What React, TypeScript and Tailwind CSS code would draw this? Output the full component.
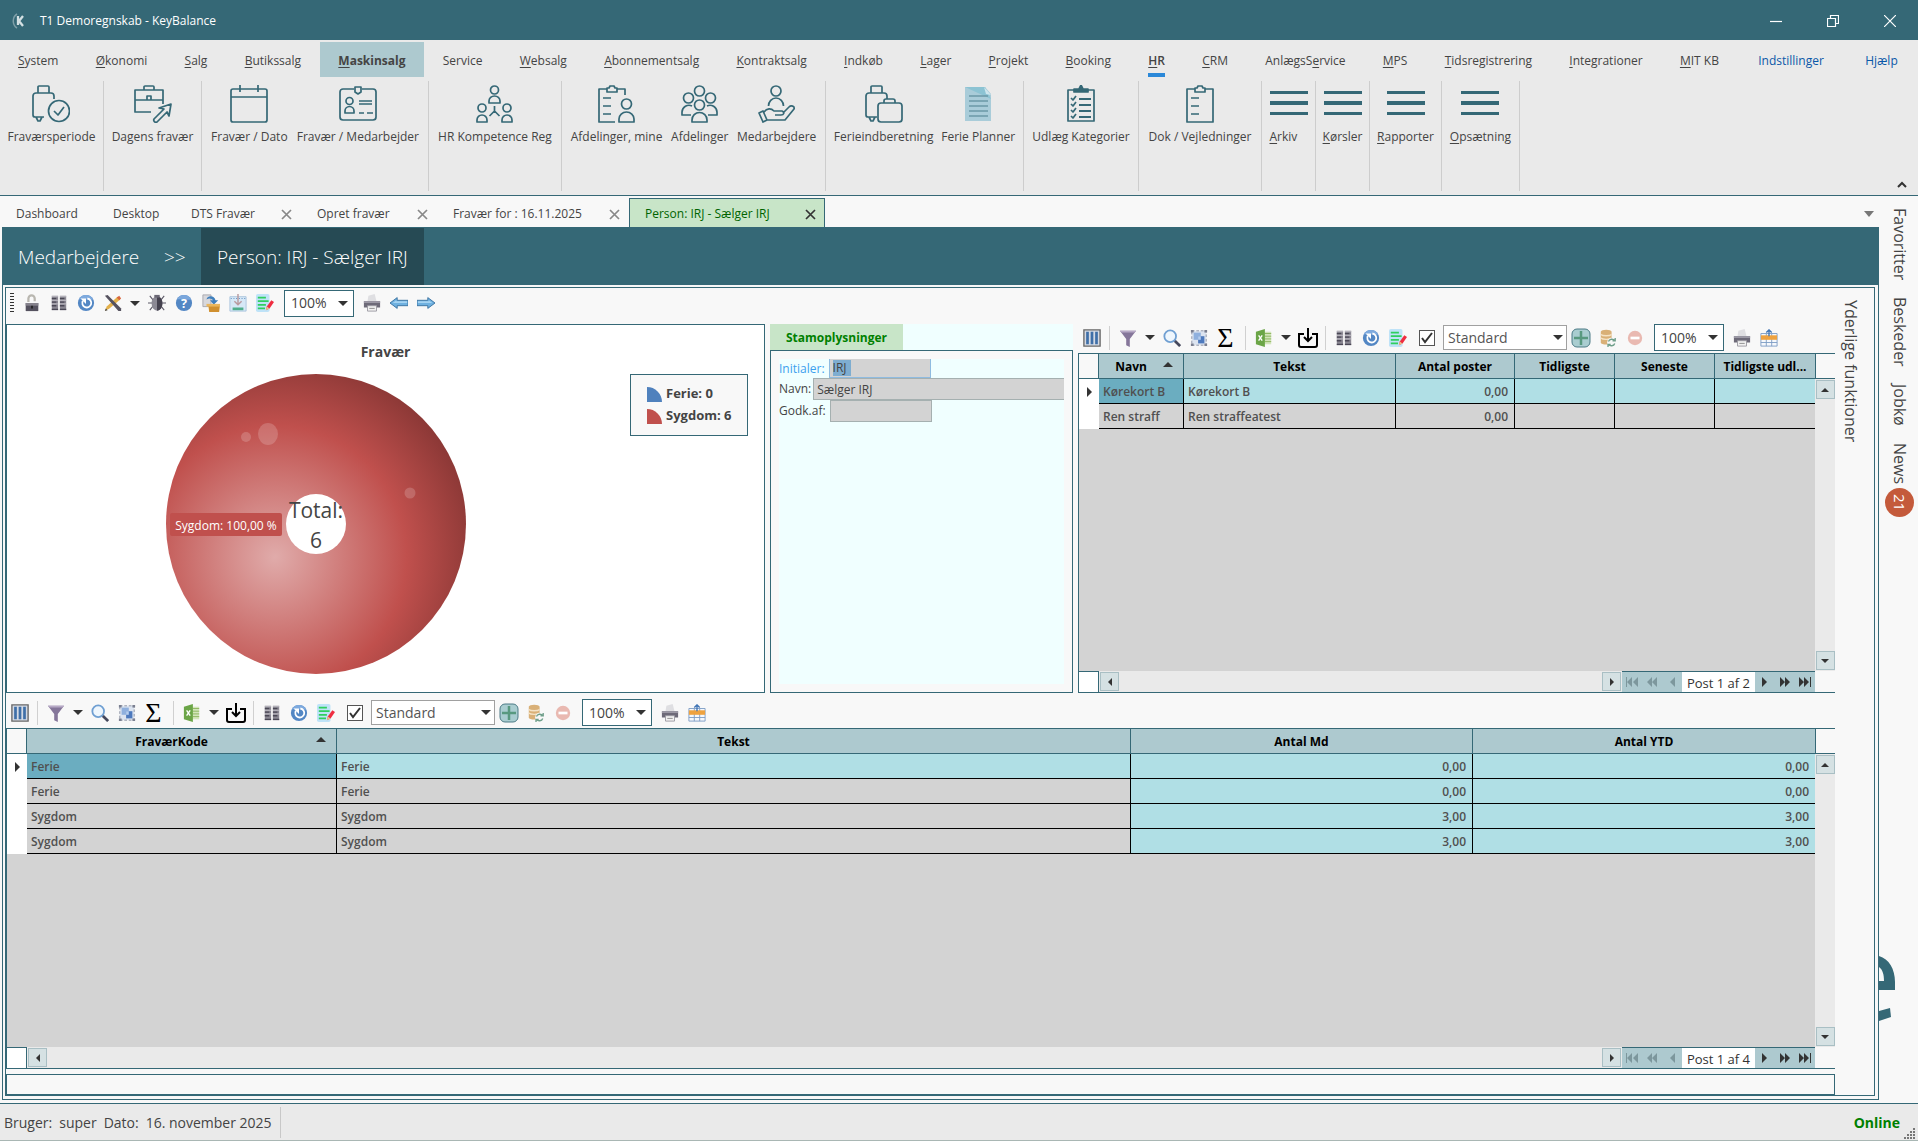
import { useState, type ReactNode } from "react";

const menu = [
  { key: "S", rest: "ystem" },
  { key: "Ø", rest: "konomi" },
  { key: "S", rest: "alg" },
  { key: "B", rest: "utikssalg" },
  { key: "M", rest: "askinsalg", highlight: true },
  { key: "", rest: "Service" },
  { key: "W", rest: "ebsalg" },
  { key: "A", rest: "bonnementsalg" },
  { key: "K", rest: "ontraktsalg" },
  { key: "I", rest: "ndkøb" },
  { key: "L", rest: "ager" },
  { key: "P", rest: "rojekt" },
  { key: "B", rest: "ooking" },
  { key: "H", rest: "R", current: true },
  { key: "C", rest: "RM" },
  { before: "AnlægsS", key: "e", rest: "rvice" },
  { key: "M", rest: "PS" },
  { key: "T", rest: "idsregistrering" },
  { key: "I", rest: "ntegrationer" },
  { key: "M", rest: "IT KB" },
  { key: "", rest: "Indstillinger", blue: true },
  { key: "", rest: "Hjælp", blue: true },
];

/* ---------- ribbon icons ---------- */

function Line({ children }: { children: ReactNode }) {
  return (
    <svg width="38" height="38" viewBox="0 0 38 38" fill="none" stroke="#356876" strokeWidth="1.7" strokeLinejoin="round" aria-hidden="true">
      {children}
    </svg>
  );
}

const Suitcase = () => (
  <path d="M6 8V2a1 1 0 0 1 1-1h9a1 1 0 0 1 1 1v6M12 32H3a2 2 0 0 1-2-2V11a3 3 0 0 1 3-3h15a3 3 0 0 1 3 3v3M4 32l2 4h2l2-4" />
);

const ribbonIcons: Record<string, ReactNode> = {
  period: (
    <Line>
      <Suitcase />
      <circle cx="27" cy="26" r="10.5" fill="#eaeaea" />
      <path d="M22 26l4 4 6-8" />
    </Line>
  ),
  today: (
    <Line>
      <path d="M10 5V2a1 1 0 0 1 1-1h8a1 1 0 0 1 1 1v3M1 5h28v10H1zM1 15v12h16M29 15v4M13 11h4v4h-4z" />
      <path d="M20 34l10-10-5-1 12-4-2 12-2-4-10 10c-2 1-4-1-3-3z" />
    </Line>
  ),
  calendar: (
    <Line>
      <rect x="1" y="4" width="36" height="33" rx="2" />
      <path d="M1 12h36M10 0v7M28 0v7" />
    </Line>
  ),
  badge: (
    <Line>
      <path d="M15 4H4a3 3 0 0 0-3 3v25a3 3 0 0 0 3 3h30a3 3 0 0 0 3-3V7a3 3 0 0 0-3-3H23" />
      <path d="M16 2h6v5l-3 2-3-2zM20 16h13M20 19h13M20 28h5M28 28h6" />
      <circle cx="10.500" cy="16" r="3.500" />
      <path d="M6 28v-2a4.500 4.500 0 0 1 9 0v2z" />
    </Line>
  ),
  tree: (
    <Line>
      <circle cx="18.500" cy="5" r="4" />
      <path d="M13 18v-2a5.500 5 0 0 1 11 0v2zM18.500 21v5l-5 5M18.500 26l5 5" />
      <circle cx="6" cy="23" r="4" />
      <path d="M1 37v-2a5 5 0 0 1 10 0v2z" />
      <circle cx="31" cy="23" r="4" />
      <path d="M26 37v-2a5 5 0 0 1 10 0v2z" />
    </Line>
  ),
  clipPerson: (
    <Line>
      <path d="M9 4H1v33h16M19 4h8v6M9 3h2l1-2h4l1 2h2v4H9zM5 13h8M5 21h8M5 29h8" />
      <circle cx="28.500" cy="19" r="5" />
      <path d="M21 37v-3a7.500 7 0 0 1 15 0v3z" />
    </Line>
  ),
  people: (
    <Line>
      <circle cx="18.500" cy="6" r="5" />
      <circle cx="7.500" cy="13" r="5" />
      <circle cx="29.500" cy="13" r="5" />
      <circle cx="18.500" cy="20" r="5" />
      <path d="M11 37v-2a7 7 0 0 1 15 0v2zM10 30H1v-3a7 7 0 0 1 10-6M27 30h9v-3a7 7 0 0 0-10-6" />
    </Line>
  ),
  hand: (
    <Line>
      <circle cx="18" cy="6" r="5" />
      <path d="M10.500 21a7.500 8 0 0 1 15 0M1 28l4-2 4 9-4 2zM6 27c3-4 7-4 10-1h8c3 1 2 4-1 4h-6M25 28l6-6c2-2 6-1 5 2l-9 11H8" />
    </Line>
  ),
  luggage: (
    <Line>
      <Suitcase />
      <rect x="13" y="18" width="24" height="19" rx="3" fill="#eaeaea" />
      <path d="M19 18v-2a2 2 0 0 1 2-2h7a2 2 0 0 1 2 2v2" />
    </Line>
  ),
  planner: (
    <svg width="38" height="38" viewBox="0 0 38 38" aria-hidden="true">
      <path d="M6 2h20l6 7v27H6z" fill="#a9ccd9" />
      <path d="M6 2h20l6 12z" fill="#8cc3d3" />
      <path d="M25 2l7 8-5-1z" fill="#cfe6ee" />
      <path d="M10 11h19M10 16h19M10 21h19M10 26h19M10 31h19" stroke="#6b98a6" strokeWidth="1.500" />
    </svg>
  ),
  checklist: (
    <Line>
      <path d="M6 5h26v31H6z" />
      <path d="M12 7V4h5l2-4 2 4h5v3z" fill="#356876" />
      <path d="M17 14h12M17 20h12M17 26h12M17 32h12" strokeWidth="2" />
      <path d="M9 13l2 2 3-4M9 19l2 2 3-4M9 25l2 2 3-4M9 31l2 2 3-4" />
    </Line>
  ),
  clip: (
    <Line>
      <path d="M14 4H6v33h26V4h-8M14 3h2l1-2h4l1 2h2v4H14zM10 13h8M10 21h8M10 29h8" />
    </Line>
  ),
  bars: (
    <svg width="38" height="38" viewBox="0 0 38 38" fill="#356876" aria-hidden="true">
      <path d="M0 6h38v3H0zM0 16h38v4H0zM0 27h38v3H0z" />
    </svg>
  ),
};

const ribbon = [
  [{ icon: "period", label: "Fraværsperiode" }],
  [{ icon: "today", label: "Dagens fravær" }],
  [
    { icon: "calendar", label: "Fravær / Dato" },
    { icon: "badge", label: "Fravær / Medarbejder" },
  ],
  [{ icon: "tree", label: "HR Kompetence Reg" }],
  [
    { icon: "clipPerson", label: "Afdelinger, mine" },
    { icon: "people", label: "Afdelinger" },
    { icon: "hand", label: "Medarbejdere" },
  ],
  [
    { icon: "luggage", label: "Ferieindberetning" },
    { icon: "planner", label: "Ferie Planner" },
  ],
  [{ icon: "checklist", label: "Udlæg Kategorier" }],
  [{ icon: "clip", label: "Dok / Vejledninger" }],
  [{ icon: "bars", label: "Arkiv", menu: true }],
  [{ icon: "bars", label: "Kørsler", menu: true }],
  [{ icon: "bars", label: "Rapporter", menu: true }],
  [{ icon: "bars", label: "Opsætning", menu: true }],
];

/* ---------- toolbar icons ---------- */

const Svg = ({ children }: { children: ReactNode }) => (
  <svg width="18" height="18" viewBox="0 0 20 20" aria-hidden="true">
    {children}
  </svg>
);

const toolIcons: Record<string, ReactNode> = {
  lock: (
    <Svg>
      <path d="M6 9V5a3.500 3.500 0 0 1 7 0v3" fill="none" stroke="#b9b7b0" strokeWidth="2.500" />
      <path d="M3 10h14v9H3z" fill="#55525f" />
      <path d="M3 10h14v3H3z" fill="#85828c" />
      <path d="M9 13h2v3H9z" fill="#222" />
    </Svg>
  ),
  columns: (
    <Svg>
      <path d="M2 2h7v16H2zM11 2h7v16h-7z" fill="#8a8792" />
      <path d="M2 5h5M2 9h5M2 13h5M2 17h7M11 5h5M11 9h5M11 13h5M11 17h7" stroke="#4a4755" strokeWidth="1.500" />
      <path d="M2 3h7M11 3h7M2 7h7M11 7h7M2 11h7M11 11h7" stroke="#c3c1c8" strokeWidth="1" />
    </Svg>
  ),
  refresh: (
    <Svg>
      <circle cx="10" cy="10" r="9" fill="#5387c4" />
      <path d="M2 6a9 9 0 0 1 16 0c-4 1-10-1-16 0z" fill="#7eaade" />
      <path d="M6.500 7.500a5 5 0 1 0 5-2.500" fill="none" stroke="#fff" strokeWidth="2" />
      <path d="M4 5h6v6z" fill="#fff" />
    </Svg>
  ),
  tools: (
    <Svg>
      <path d="M1 19l2-5L15 3l3 3L6 16z" fill="#e3b04b" />
      <path d="M14 4l3-2 2 3-2 2z" fill="#d9663f" />
      <path d="M1 2l3-1 15 15v3h-3z" fill="#55525f" />
      <path d="M1 19l1-3 2 2z" fill="#444" />
    </Svg>
  ),
  bug: (
    <Svg>
      <path d="M2 2l4 5M0 10h5M2 18l4-5M18 2l-4 5M20 10h-5M18 18l-4-5" stroke="#5b5866" strokeWidth="1.200" />
      <ellipse cx="10" cy="10.500" rx="6" ry="8" fill="#8b8994" />
      <path d="M10 2.500c8 0 8 16 0 16z" fill="#45424f" />
      <path d="M7 1h6v3H7z" fill="#6b6875" />
    </Svg>
  ),
  help: (
    <Svg>
      <circle cx="10" cy="10" r="9" fill="#5387c4" />
      <path d="M2 6a9 9 0 0 1 16 0c-4 1-10-1-16 0z" fill="#7ba7dc" />
      <text x="10" y="15" textAnchor="middle" fontSize="14" fontWeight="700" fill="#fff">?</text>
    </Svg>
  ),
  box: (
    <Svg>
      <path d="M1 1h9v13H1z" fill="#d8d8dc" stroke="#a5a5ad" />
      <path d="M5 6c1-5 9-5 10 1h3l-5 5-4-5h3c-1-2-4-3-7-1z" fill="#3f7fbd" />
      <path d="M7 12h13l-1 8H8z" fill="#d0902f" />
      <path d="M5 11h15v3H5z" fill="#eab65c" />
    </Svg>
  ),
  importFile: (
    <Svg>
      <path d="M1 3h18v16H1z" fill="#d6e8f7" stroke="#a8c3dd" />
      <path d="M2 5h16" stroke="#4d7fb5" strokeDasharray="1 2" />
      <path d="M10 0v11M6 8l4 4 4-4" fill="none" stroke="#b99a9f" strokeWidth="1.600" />
      <path d="M4 15h12v3H4z" fill="#4fae8c" />
    </Svg>
  ),
  edit: (
    <Svg>
      <rect x="0" y="0" width="15" height="20" rx="2" fill="#bfe3f8" />
      <path d="M2 4h9M2 8h12M2 12h9M2 16h8" stroke="#2fcf5f" strokeWidth="1.900" />
      <path d="M11 18l1-4 5-7 3 2-5 7z" fill="#ef2d40" />
      <path d="M11 18l1-4 3 2z" fill="#e8c58a" />
    </Svg>
  ),
  print: (
    <Svg>
      <path d="M5 8l1-6 7-2 2 8z" fill="#dfdfe2" />
      <path d="M1 8h18v7H1z" fill="#6d6a78" />
      <path d="M1 8h18v2H1z" fill="#9c99a5" />
      <path d="M5 13h10v6H5z" fill="#f1f1f1" stroke="#9a98a0" />
      <path d="M7 16h6" stroke="#888" />
    </Svg>
  ),
  prev: (
    <Svg>
      <path d="M0 10l8-6v3h12v6H8v3z" fill="#6fb1e0" stroke="#386f9e" />
      <path d="M3 10l4-3v1h12v2z" fill="#a5d3f2" />
    </Svg>
  ),
  next: (
    <Svg>
      <path d="M20 10l-8-6v3H0v6h12v3z" fill="#6fb1e0" stroke="#386f9e" />
      <path d="M17 10l-4-3v1H1v2z" fill="#a5d3f2" />
    </Svg>
  ),
  grid: (
    <Svg>
      <path d="M1 1h18v18H1z" fill="#d4dae4" stroke="#686868" strokeWidth="1.500" />
      <path d="M5 3v14M10 3v14M15 3v14" stroke="#3f6fa8" strokeWidth="3" />
    </Svg>
  ),
  funnel: (
    <Svg>
      <path d="M1 2h18l-7 9v9l-4-2v-7z" fill="#85769a" />
      <path d="M1 2h18l-2 2H3z" fill="#b7a9c6" />
    </Svg>
  ),
  search: (
    <Svg>
      <path d="M13 13l6 6" stroke="#45485c" strokeWidth="3" />
      <circle cx="8" cy="8" r="6.500" fill="#eef6fd" stroke="#6f9fd2" strokeWidth="2" />
    </Svg>
  ),
  select: (
    <Svg>
      <path d="M2 2h16v16H2z" fill="#dce4f0" stroke="#8a90a0" strokeDasharray="3 2" />
      <path d="M4 4h8v8H4z" fill="#8fb0de" />
      <path d="M9 8h7v8H9z" fill="#4d79bd" />
      <path d="M9 8h3v4H9z" fill="#b5cdee" />
      <path d="M1 1h3v3H1zM16 1h3v3h-3zM1 16h3v3H1zM16 16h3v3h-3z" fill="#7a7f90" />
    </Svg>
  ),
  excel: (
    <Svg>
      <path d="M10 3h8v14h-8z" fill="#d3e5bb" />
      <path d="M11 5h7M11 8h7M11 11h7M11 14h7" stroke="#8ab35a" />
      <path d="M1 3l10-3v20L1 17z" fill="#6ba547" />
      <path d="M4 7l4 6M8 7l-4 6" stroke="#fff" strokeWidth="1.500" />
    </Svg>
  ),
  download: (
    <svg width="20" height="20" viewBox="0 0 20 20" aria-hidden="true">
      <path d="M6 6H1v11a2 2 0 0 0 2 2h14a2 2 0 0 0 2-2V6h-5M10 0v13M6 9l4 4 4-4" fill="none" stroke="#000" strokeWidth="2" />
    </svg>
  ),
  add: (
    <svg width="20" height="20" viewBox="0 0 20 20" aria-hidden="true">
      <rect x="1" y="1" width="18" height="18" rx="5" fill="#a9cdd0" stroke="#4c7b86" />
      <path d="M10 3v14M3 10h14" stroke="#58997f" strokeWidth="2.500" />
    </svg>
  ),
  database: (
    <Svg>
      <path d="M2 3c0-3 12-3 12 0v12c0 3-12 3-12 0z" fill="#d9b077" />
      <path d="M2 6c2 2 10 2 12 0M2 10c2 2 10 2 12 0" fill="none" stroke="#f5e3c6" strokeWidth="1.500" />
      <circle cx="14" cy="15" r="5" fill="#f8f8f8" />
      <path d="M10.500 14a4 4 0 0 1 7-1M17.500 16a4 4 0 0 1-7 1M18 10v3h-3M10 20v-3h3" fill="none" stroke="#6f9f8a" strokeWidth="1.500" />
    </Svg>
  ),
  remove: (
    <Svg>
      <circle cx="10" cy="10" r="8" fill="#e9b9b1" />
      <path d="M5 10h10" stroke="#fff" strokeWidth="3" />
    </Svg>
  ),
  table: (
    <Svg>
      <path d="M1 5h18v14H1z" fill="#f5f8fc" stroke="#7d9cc4" />
      <path d="M1 15h18M7 5v14M13 5v14" stroke="#7d9cc4" />
      <path d="M1 7h18v5H1z" fill="#eea23f" />
      <path d="M10 8V2M7 4l3-3 3 3" fill="none" stroke="#3f74b5" strokeWidth="1.500" />
    </Svg>
  ),
};

function Tool({ icon, label }: { icon: string; label: string }) {
  return (
    <button type="button" aria-label={label} className="flex h-6 w-[27px] shrink-0 items-center justify-center">
      {toolIcons[icon]}
    </button>
  );
}

const DownCaret = () => (
  <svg width="10" height="5" viewBox="0 0 10 5" fill="#333" aria-hidden="true">
    <path d="M0 0h10L5 5z" />
  </svg>
);

function CaretButton({ label }: { label: string }) {
  return (
    <button type="button" aria-label={label} className="flex h-6 w-[17px] shrink-0 items-center justify-center">
      <DownCaret />
    </button>
  );
}

const Divider = () => <span className="mx-1 h-6 w-px shrink-0 bg-[#d0d0d0]" />;

function Zoom() {
  return (
    <span className="relative mr-1 flex h-[27px] w-[70px] shrink-0 items-center">
      <select aria-label="Zoom" className="size-full appearance-none border border-[#356876] bg-white pl-1.5 text-sm text-[#444] outline-none">
        <option>100%</option>
      </select>
      <span className="pointer-events-none absolute right-1.5">
        <DownCaret />
      </span>
    </span>
  );
}

function GridToolbar() {
  const [checked, setChecked] = useState(true);
  return (
    <div className="flex items-center">
      <Tool icon="grid" label="Kolonner" />
      <Divider />
      <Tool icon="funnel" label="Filter" />
      <CaretButton label="Filtervalg" />
      <Tool icon="search" label="Søg" />
      <Tool icon="select" label="Marker" />
      <button type="button" aria-label="Sum" className="mr-0.5 w-[27px] shrink-0 font-['Liberation_Serif',serif] text-[28px] leading-6 text-black">
        Σ
      </button>
      <Divider />
      <Tool icon="excel" label="Excel" />
      <CaretButton label="Excelvalg" />
      <Tool icon="download" label="Hent" />
      <Divider />
      <Tool icon="columns" label="Layout" />
      <Tool icon="refresh" label="Opdater" />
      <Tool icon="edit" label="Rediger" />
      <span className="relative mr-1.5 ml-2 flex size-4 shrink-0">
        <input
          type="checkbox"
          aria-label="Vis layout"
          checked={checked}
          onChange={() => setChecked(!checked)}
          className="size-4 appearance-none border border-[#555] bg-white"
        />
        {checked && (
          <svg viewBox="0 0 16 16" className="pointer-events-none absolute inset-0 size-4" fill="none" stroke="#333" strokeWidth="2">
            <path d="M3 8l3 4 7-9" />
          </svg>
        )}
      </span>
      <span className="relative ml-0.5 flex h-[25px] w-[124px] shrink-0 items-center">
        <select aria-label="Layout" className="size-full appearance-none border border-[#a0a0a0] bg-white pl-1 text-sm text-[#555] outline-none">
          <option>Standard</option>
        </select>
        <span className="pointer-events-none absolute right-1">
          <DownCaret />
        </span>
      </span>
      <Tool icon="add" label="Tilføj" />
      <Tool icon="database" label="Database" />
      <Tool icon="remove" label="Fjern" />
      <span className="w-1.5" />
      <Zoom />
      <Tool icon="print" label="Udskriv" />
      <Tool icon="table" label="Tabel" />
    </div>
  );
}

/* ---------- data grid ---------- */

type Column = { title: string; width?: string; numeric?: boolean; sorted?: boolean; tinted?: boolean };

function ArrowButton({ d, label }: { d: string; label: string }) {
  return (
    <button type="button" aria-label={label} className="flex size-[19px] shrink-0 items-center justify-center border border-[#a9bfc4] bg-[#d5e1e3]">
      <svg width="10" height="10" viewBox="0 0 10 10" fill="#333" aria-hidden="true">
        <path d={d} />
      </svg>
    </button>
  );
}

function PagerButton({ d, label, disabled }: { d: string; label: string; disabled?: boolean }) {
  return (
    <button type="button" aria-label={label} disabled={disabled} className="flex h-full w-5 items-center justify-center text-[#333] disabled:text-[#7d979d]">
      <svg width="12" height="10" viewBox="0 0 12 10" fill="currentColor" aria-hidden="true">
        <path d={d} />
      </svg>
    </button>
  );
}

function DataGrid({ name, columns, rows }: { name: string; columns: Column[]; rows: string[][] }) {
  return (
    <div className="flex min-h-0 flex-1 flex-col border-y border-l border-[#356876]">
      <div className="flex min-h-0 flex-1">
        <div className="min-w-0 flex-1 bg-[#d3d3d3]">
          <table aria-label={name} className="w-full table-fixed border-separate border-spacing-0 text-xs">
            <colgroup>
              <col className="w-5" />
              {columns.map((c) => (
                <col key={c.title} className={c.width} />
              ))}
            </colgroup>
            <thead>
              <tr className="h-[25px]">
                <td className="border-r border-b border-[#356876] bg-[#f8f8f8] p-0" />
                {columns.map((c, i) => (
                  <th
                    key={c.title}
                    scope="col"
                    className={`relative border-b border-[#356876] bg-[#adc9cf] px-1 pt-0.5 pb-0 font-bold whitespace-nowrap text-black ${i < columns.length - 1 ? "border-r" : ""} ${c.sorted ? "pr-6" : ""}`}
                  >
                    {c.title}
                    {c.sorted && (
                      <svg width="10" height="5" viewBox="0 0 10 5" fill="#333" className="absolute top-2 right-2.5">
                        <path d="M0 5h10L5 0z" />
                      </svg>
                    )}
                  </th>
                ))}
              </tr>
            </thead>
            <tbody>
              {rows.map((row, r) => (
                <tr key={r} className="h-[25px]">
                  <td className="bg-white p-0">
                    {r === 0 && (
                      <svg width="5" height="10" viewBox="0 0 5 10" fill="#333" className="mx-auto">
                        <path d="M0 0v10l5-5z" />
                      </svg>
                    )}
                  </td>
                  {row.map((cell, i) => (
                    <td
                      key={i}
                      className={`border-b border-black pt-0.5 pb-0 pl-1 font-semibold whitespace-nowrap text-[#505050] ${i < row.length - 1 ? "border-r" : ""} ${columns[i].numeric ? "pr-1.5 text-right" : ""} ${
                        r === 0 && i === 0 ? "bg-[#6badc0]" : r === 0 || columns[i].tinted ? "bg-[#b0dfe5]" : "bg-[#d3d3d3]"
                      }`}
                    >
                      {cell}
                    </td>
                  ))}
                </tr>
              ))}
            </tbody>
          </table>
        </div>
        <div className="flex w-5 shrink-0 flex-col bg-[#eaeaea]">
          <div className="h-[25px] shrink-0 border-b border-l border-[#356876] bg-[#f8f8f8]" />
          <div className="flex flex-1 flex-col items-center justify-between py-px">
            <ArrowButton label="Op" d="M1 7h8L5 3z" />
            <ArrowButton label="Ned" d="M1 3h8L5 7z" />
          </div>
        </div>
      </div>
      <div className="flex h-[21px] shrink-0 pr-5">
        <div className="w-5 border-t border-r border-[#356876] bg-white" />
        <div className="flex flex-1 items-center justify-between bg-[#eaeaea] px-px">
          <ArrowButton label="Venstre" d="M7 1v8L3 5z" />
          <ArrowButton label="Højre" d="M3 1v8l4-4z" />
        </div>
        <div className="flex w-[193px] items-center border-t border-[#356876] bg-[#adc9cf]">
          <PagerButton disabled label="Første" d="M0 0h1v10H0zM6 0v10L1 5zM12 0v10L7 5z" />
          <PagerButton disabled label="Forrige side" d="M6 0v10L1 5zM11 0v10L6 5z" />
          <PagerButton disabled label="Forrige" d="M9 0v10L4 5z" />
          <span className="h-full flex-1 bg-white text-center text-[13px] leading-[22px] whitespace-nowrap text-[#333]">Post 1 af {rows.length}</span>
          <PagerButton label="Næste" d="M3 0v10l5-5z" />
          <PagerButton label="Næste side" d="M1 0v10l5-5zM6 0v10l5-5z" />
          <PagerButton label="Sidste" d="M0 0v10l5-5zM5 0v10l5-5zM11 0h1v10h-1z" />
        </div>
      </div>
    </div>
  );
}

/* ---------- chart ---------- */

function AbsenceChart() {
  return (
    <section aria-label="Fravær" className="flex flex-col border border-[#356876] bg-white">
      <h2 className="pt-[17px] text-center text-sm leading-5 font-bold text-[#444]">Fravær</h2>
      <div className="flex items-start pt-3">
        <div className="flex flex-1 justify-center pr-1.5">
          <svg width="300" height="300" viewBox="0 0 300 300" role="img" aria-label="Sygdom: 100,00 %">
            <defs>
              <radialGradient id="ball" gradientUnits="userSpaceOnUse" cx="109" cy="183" r="212">
                <stop offset="0" stopColor="#e0abaa" />
                <stop offset="0.620" stopColor="#c0504d" />
                <stop offset="1" stopColor="#853533" />
              </radialGradient>
            </defs>
            <circle cx="150" cy="150" r="150" fill="url(#ball)" />
            <g fill="#fff" fillOpacity="0.180">
              <circle cx="80" cy="63" r="5" />
              <ellipse cx="102" cy="60" rx="10" ry="11" />
              <circle cx="244" cy="119" r="5.500" />
            </g>
            <circle cx="150" cy="150" r="30" fill="#fff" />
            <g textAnchor="middle" fill="#444" fontSize="21">
              <text x="150" y="144">Total:</text>
              <text x="150" y="174">6</text>
            </g>
            <rect x="4" y="139" width="112" height="23" rx="2" fill="#c0504d" />
            <text x="60" y="156" textAnchor="middle" fill="#fff" fontSize="12">Sygdom: 100,00 %</text>
          </svg>
        </div>
        <ul className="mr-4 flex h-[62px] w-[118px] flex-col justify-center border border-[#356876] bg-[#f8f8f8] pl-4 text-[13px] font-bold text-[#444]">
          {[
            { label: "Ferie: 0", color: "#4f81bd" },
            { label: "Sygdom: 6", color: "#c0504d" },
          ].map((item) => (
            <li key={item.label} className="flex h-[22px] items-center gap-1">
              <svg width="15" height="15" viewBox="0 0 15 15" fill={item.color}>
                <path d="M0 0a15 15 0 0 1 15 15H0z" />
              </svg>
              {item.label}
            </li>
          ))}
        </ul>
      </div>
    </section>
  );
}

function MasterData() {
  return (
    <section className="flex flex-col bg-[#f0ffff]">
      <h2 className="h-[26px] w-[133px] bg-[#c8e5c8] pt-0.5 text-center text-xs leading-6 font-bold text-[#008000]">Stamoplysninger</h2>
      <div className="flex-1 border border-[#356876] bg-[#f8f8f8] p-2">
        <div className="h-full bg-[#f0ffff] text-xs text-[#444]">
          <div className="flex h-[19px] items-center gap-1">
            <label htmlFor="initialer" className="text-[#3ca0ee]">Initialer:</label>
            <span className="flex h-[19px] w-[102px] items-center border border-t-0 border-[#8fbbe0] bg-[#d3d3d3] pl-[3px]">
              <input id="initialer" defaultValue="IRJ" className="h-4 w-[18px] bg-[#7eadd0] outline-none" />
            </span>
          </div>
          <div className="flex h-[22px] items-center gap-0.5">
            <label htmlFor="navn">Navn:</label>
            <input id="navn" defaultValue="Sælger IRJ" className="h-[22px] min-w-0 flex-1 border border-r-0 border-[#a5b0b0] bg-[#d3d3d3] pl-[3px] outline-none" />
          </div>
          <div className="flex h-[22px] items-center gap-1">
            <label htmlFor="godk">Godk.af:</label>
            <input id="godk" className="h-[22px] w-[102px] border border-[#a5b0b0] bg-[#d3d3d3] pl-[3px] outline-none" />
          </div>
        </div>
      </div>
    </section>
  );
}

/* ---------- window parts ---------- */

function TitleBar() {
  return (
    <header className="flex h-10 items-center bg-[#356876] pt-0.5 text-xs text-white">
      <svg width="18" height="18" viewBox="0 0 18 18" className="mr-3 ml-2.5" aria-hidden="true">
        <path d="M7 2C2 5 2 13 7 16" fill="none" stroke="#7f9fa8" strokeWidth="1.500" />
        <path d="M8 4v9M13 4L9 9l4 5" fill="none" stroke="#d4e0e3" strokeWidth="2.300" />
      </svg>
      <h1>T1 Demoregnskab - KeyBalance</h1>
      <div className="ml-auto flex h-full">
        {[
          { label: "Minimer", d: "M0 6.500h12" },
          { label: "Gendan", d: "M.5 3.500h8v8h-8zM3.500 3V.5h8v8H9" },
          { label: "Luk", d: "M0 0l12 12M12 0L0 12" },
        ].map((b) => (
          <button key={b.label} type="button" aria-label={b.label} className="flex w-[57px] items-center justify-center">
            <svg width="12" height="12" viewBox="0 0 12 12" fill="none" stroke="#fff" strokeWidth="1.200">
              <path d={b.d} />
            </svg>
          </button>
        ))}
      </div>
    </header>
  );
}

function MenuBar() {
  return (
    <nav className="flex justify-between pt-0.5 text-xs text-[#444]">
      {menu.map((m, i) => (
        <button
          key={i}
          type="button"
          className={`relative h-[35px] pt-0.5 ${m.highlight ? "bg-[#adc9cf] font-bold" : ""} ${m.blue ? "px-5 text-[#0a58a8]" : "px-[18px]"} ${m.current ? "font-semibold" : ""}`}
        >
          {m.before}
          <span className="underline underline-offset-2">{m.key}</span>
          {m.rest}
          {m.current && <span className="absolute inset-x-[18px] bottom-0 h-1 bg-[#2b88d8]" />}
        </button>
      ))}
    </nav>
  );
}

function Ribbon() {
  return (
    <div className="relative mt-1 grid h-[114px] grid-cols-[104px_98px_227px_133px_264px_198px_115px_123px_54px_54px_72px_78px] pb-1">
      {ribbon.map((group, i) => (
        <div key={i} className="flex justify-evenly border-r border-[#cdcdcd]">
          {group.map((item) => (
            <button key={item.label} type="button" className="flex flex-col items-center pt-1 text-xs whitespace-nowrap text-[#444]">
              {ribbonIcons[item.icon]}
              <span className="mt-1 self-start leading-5">
                {"menu" in item ? (
                  <>
                    <span className="underline underline-offset-2">{item.label[0]}</span>
                    {item.label.slice(1)}
                  </>
                ) : (
                  item.label
                )}
              </span>
            </button>
          ))}
        </div>
      ))}
      <button type="button" aria-label="Skjul bånd" className="absolute right-2.5 bottom-1">
        <svg width="12" height="12" viewBox="0 0 12 12" fill="none" stroke="#333" strokeWidth="2">
          <path d="M2 8l4-4 4 4" />
        </svg>
      </button>
    </div>
  );
}

const Cross = () => (
  <svg width="11" height="11" viewBox="0 0 11 11" fill="none" stroke="currentColor" strokeWidth="1.700">
    <path d="M1 1l9 9M10 1l-9 9" />
  </svg>
);

function Tabs() {
  const tabs = ["Dashboard", "Desktop", "DTS Fravær", "Opret fravær", "Fravær for : 16.11.2025", "Person: IRJ - Sælger IRJ"];
  return (
    <div className="flex h-[31px] items-center justify-between pr-[5px]">
      <div className="grid grid-cols-[97px_78px_126px_136px_192px_196px] self-end text-xs text-[#444]">
        {tabs.map((tab, i) => (
          <div
            key={tab}
            className={`flex h-[29px] items-center justify-between border border-b-0 pt-0.5 pr-2 pl-[15px] whitespace-nowrap ${
              i === 5 ? "border-[#356876] bg-[#c8e5c8] text-[#006400]" : "border-transparent"
            }`}
          >
            <button type="button">{tab}</button>
            {i > 1 && (
              <button type="button" aria-label={`Luk ${tab}`} className={i === 5 ? "text-[#333]" : "text-[#888]"}>
                <Cross />
              </button>
            )}
          </div>
        ))}
      </div>
      <button type="button" aria-label="Flere faner" className="pt-1">
        <svg width="10" height="6" viewBox="0 0 10 6" fill="#777">
          <path d="M0 0h10L5 6z" />
        </svg>
      </button>
    </div>
  );
}

function SideRail() {
  return (
    <aside className="relative flex w-[39px] shrink-0 flex-col items-center bg-[#f8f8f8] pt-3 pl-0.5 text-[#444]">
      <div className="flex flex-col items-center gap-[17px]">
        {["Favoritter", "Beskeder", "Jobkø", "News"].map((label) => (
          <button key={label} type="button" className="text-base [writing-mode:vertical-rl]">
            {label}
          </button>
        ))}
      </div>
      <span className="mt-1 flex size-[29px] items-center justify-center rounded-full bg-[#c45a3b] text-[15px] text-white [writing-mode:vertical-rl]">21</span>
      {/* edge of the desktop logo behind the window */}
      <svg width="17" height="68" viewBox="0 0 17 68" fill="#356876" className="pointer-events-none absolute bottom-20 left-0" aria-hidden="true">
        <path fillRule="evenodd" d="M0 1c10 3 16 13 16 26v8H0v-9h5c0-6-1-11-5-14z" />
        <path d="M0 56l11-3 1 9-12 4z" />
      </svg>
    </aside>
  );
}

function StatusBar() {
  return (
    <footer className="flex h-[38px] items-center border-t border-b border-t-[#356876] border-b-[#a9b7b4] bg-[#eaeaea] pr-[18px] text-sm text-[#444]">
      <dl className="flex h-[31px] items-center gap-[7px] border-r border-[#c8c8c8] pt-0.5 pr-2 pl-1">
        <dt>Bruger:</dt>
        <dd>super</dd>
        <dt>Dato:</dt>
        <dd>16. november 2025</dd>
      </dl>
      <span className="ml-auto pt-0.5 font-bold text-[#008000]">Online</span>
      <svg width="12" height="12" viewBox="0 0 12 12" fill="#777" className="-mr-4 ml-1 self-end" aria-hidden="true">
        <path d="M9 0h2v2H9zM6 3h2v2H6zM9 3h2v2H9zM3 6h2v2H3zM6 6h2v2H6zM9 6h2v2H9zM0 9h2v2H0zM3 9h2v2H3zM6 9h2v2H6zM9 9h2v2H9z" />
      </svg>
    </footer>
  );
}

export default function App() {
  return (
    <div className="flex min-h-screen flex-col bg-[#f8f8f8] font-['Open_Sans','Noto_Sans',sans-serif]">
      <TitleBar />
      <div className="border-b border-[#356876] bg-[#eaeaea]">
        <MenuBar />
        <Ribbon />
      </div>
      <div className="flex flex-1">
        <div className="flex min-w-0 flex-1 flex-col pb-[3px]">
          <Tabs />
          <main className="ml-0.5 flex flex-1 flex-col border border-[#356876]">
            <div className="flex h-[57px] items-center bg-[#356876] text-[19px] font-light text-white">
              <a href="#medarbejdere" className="w-[146px] pt-0.5 pl-[15px]">Medarbejdere</a>
              <span className="w-[52px] pt-0.5 pl-[15px]">&gt;&gt;</span>
              <span className="flex h-full items-center bg-[#264a54] px-4 pt-0.5">Person: IRJ - Sælger IRJ</span>
            </div>
            <div className="m-0.5 mr-[3px] mb-[3px] flex flex-1 border border-[#356876]">
              <div className="flex min-w-0 flex-1 flex-col">
                <div className="flex h-9 items-center pb-1.5 pl-1">
                  <svg width="4" height="20" viewBox="0 0 4 20" className="mr-1" aria-hidden="true">
                    <path d="M2 0v20" stroke="#333" strokeWidth="4" strokeDasharray="1 2" />
                  </svg>
                  <Tool icon="lock" label="Lås" />
                  <Tool icon="columns" label="Layout" />
                  <Tool icon="refresh" label="Opdater" />
                  <Tool icon="tools" label="Værktøjer" />
                  <CaretButton label="Værktøjsvalg" />
                  <Tool icon="bug" label="Fejl" />
                  <Tool icon="help" label="Hjælp" />
                  <Tool icon="box" label="Pak" />
                  <Tool icon="importFile" label="Importer" />
                  <Tool icon="edit" label="Rediger" />
                  <span className="w-1.5" />
                  <Zoom />
                  <Tool icon="print" label="Udskriv" />
                  <Tool icon="prev" label="Forrige" />
                  <Tool icon="next" label="Næste" />
                </div>
                <div className="grid h-[369px] grid-cols-[759fr_303fr_757fr] gap-[5px]">
                  <AbsenceChart />
                  <MasterData />
                  <section className="flex min-w-0 flex-col">
                    <div className="h-[29px]">
                      <GridToolbar />
                    </div>
                    <DataGrid
                      name="Kompetencer"
                      columns={[
                        { title: "Navn", width: "w-[85px]", sorted: true },
                        { title: "Tekst" },
                        { title: "Antal poster", width: "w-[119px]", numeric: true },
                        { title: "Tidligste", width: "w-[100px]" },
                        { title: "Seneste", width: "w-[100px]" },
                        { title: "Tidligste udl...", width: "w-[100px]" },
                      ]}
                      rows={[
                        ["Kørekort B", "Kørekort B", "0,00", "", "", ""],
                        ["Ren straff", "Ren straffeatest", "0,00", "", "", ""],
                      ]}
                    />
                  </section>
                </div>
                <div className="flex h-[35px] items-center pt-1">
                  <GridToolbar />
                </div>
                <DataGrid
                  name="Fravær"
                  columns={[
                    { title: "FraværKode", width: "w-[310px]", sorted: true },
                    { title: "Tekst" },
                    { title: "Antal Md", width: "w-[342px]", numeric: true, tinted: true },
                    { title: "Antal YTD", width: "w-[342px]", numeric: true, tinted: true },
                  ]}
                  rows={[
                    ["Ferie", "Ferie", "0,00", "0,00"],
                    ["Ferie", "Ferie", "0,00", "0,00"],
                    ["Sygdom", "Sygdom", "3,00", "3,00"],
                    ["Sygdom", "Sygdom", "3,00", "3,00"],
                  ]}
                />
                <div className="mt-[5px] h-[21px] border border-[#356876]" />
              </div>
              <div className="flex w-[39px] shrink-0 pt-3 pl-1">
                <button type="button" className="self-start text-base text-[#444] [writing-mode:vertical-rl]">
                  Yderlige funktioner
                </button>
              </div>
            </div>
          </main>
        </div>
        <SideRail />
      </div>
      <StatusBar />
    </div>
  );
}
